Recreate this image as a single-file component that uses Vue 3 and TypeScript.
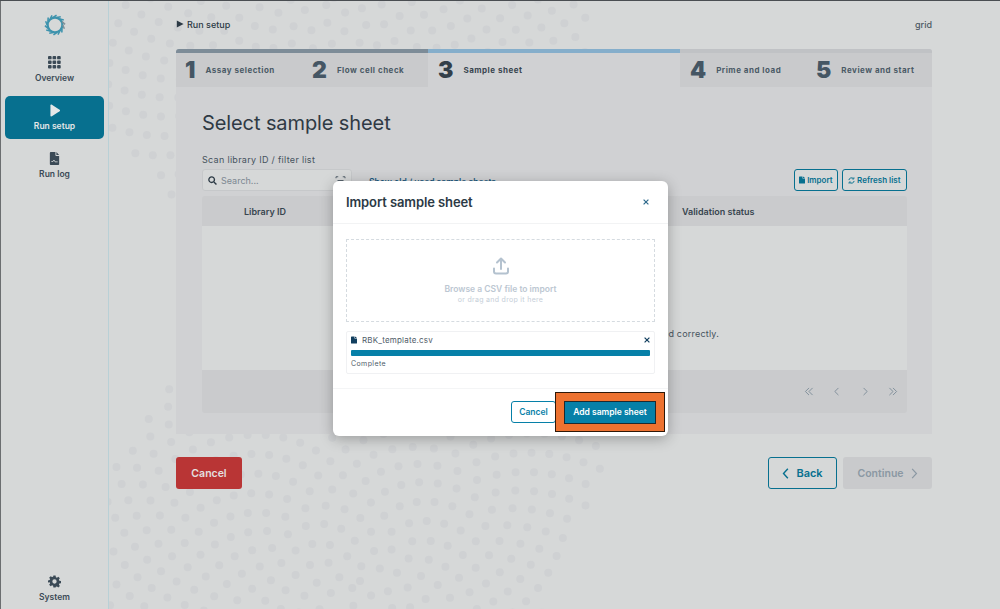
<script setup lang="ts">
const steps = [
    { n: 1, label: 'Assay selection', state: 'done' },
    { n: 2, label: 'Flow cell check', state: 'done' },
    { n: 3, label: 'Sample sheet', state: 'active' },
    { n: 4, label: 'Prime and load', state: 'todo' },
    { n: 5, label: 'Review and start', state: 'todo' },
]

// background dots: two sunflower discs, cut by the sidebar and the window
function makeDots(cx: number, cy: number, maxR: number, keep?: (x: number, y: number) => boolean) {
    const out: { x: number; y: number }[] = []
    const golden = Math.PI * (3 - Math.sqrt(5))
    for (let i = 0; i < 1400; i++) {
        const dist = 10.5 * Math.sqrt(i)
        if (dist > maxR) break
        const a = i * golden
        const x = cx + dist * Math.cos(a)
        const y = cy + dist * Math.sin(a)
        if (keep && !keep(x, y)) continue
        out.push({ x, y })
    }
    return out
}
const dots = [
    ...makeDots(334, -2, 258),
    ...makeDots(360, 581, 273, (x, y) => x < 605 - 0.39 * (y - 460)),
]

// little spokes around the logo ring
const spokes = Array.from({ length: 14 }, (_, i) => {
    const a = (i / 14) * Math.PI * 2
    const x1 = 12 + 8.5 * Math.cos(a)
    const y1 = 12 + 8.5 * Math.sin(a)
    const x2 = 12 + 11 * Math.cos(a + 0.38)
    const y2 = 12 + 11 * Math.sin(a + 0.38)
    return { x1, y1, x2, y2, grey: i >= 13 || i <= 0 }
})
</script>

<template>
    <div class="app">
        <aside class="sidebar">
            <svg class="logo" viewBox="0 0 24 24" fill="none">
                <circle cx="12" cy="12" r="8" stroke="#3e93ad" stroke-width="2.4" />
                <line
                    v-for="(s, i) in spokes"
                    :key="i"
                    :x1="s.x1" :y1="s.y1" :x2="s.x2" :y2="s.y2"
                    :stroke="s.grey ? '#7f9098' : '#3e93ad'"
                    stroke-width="1.7"
                />
            </svg>

            <a class="nav-item">
                <svg class="nav-icon" viewBox="0 0 14 14" fill="#3b4a56">
                    <template v-for="row in 3" :key="row">
                        <rect v-for="col in 3" :key="col" :x="(col - 1) * 4.9" :y="(row - 1) * 4.9" width="3.9" height="3.6" rx="1" />
                    </template>
                </svg>
                <span>Overview</span>
            </a>
            <a class="nav-item active">
                <svg class="nav-icon" viewBox="0 0 14 14" fill="#e4e7e8">
                    <path d="M2.6 1.6c0-.9.9-1.3 1.6-.9l8.3 5.4c.6.4.6 1.3 0 1.7l-8.3 5.4c-.7.4-1.6 0-1.6-.9z" />
                </svg>
                <span>Run setup</span>
            </a>
            <a class="nav-item">
                <svg class="nav-icon" viewBox="0 0 14 14" fill="#3b4a56">
                    <path d="M2 1.2C2 .5 2.5 0 3.2 0H8v3.4c0 .5.4.9.9.9H12v8.5c0 .7-.5 1.2-1.2 1.2H3.2C2.5 14 2 13.5 2 12.8z" />
                    <path d="M9 0l3 3.3H9z" />
                    <path d="M3.6 10.2h1.8l1-1.6 1.2 2h2.8" fill="none" stroke="#d6d8d8" stroke-width=".9" />
                </svg>
                <span>Run log</span>
            </a>

            <a class="nav-item system">
                <svg class="nav-icon" viewBox="0 0 24 24" fill="#3b4a56">
                    <path fill-rule="evenodd" d="M10 1h4l.6 3.1 1.9.8 2.6-1.800 2.800 2.800-1.800 2.600.8 1.900 3.100.6v4l-3.100.6-.8 1.900 1.800 2.600-2.800 2.800-2.600-1.800-1.900.8L14 23h-4l-.6-3.100-1.900-.8-2.600 1.800-2.800-2.800 1.800-2.600-.8-1.900L0 14v-4l3.100-.6.8-1.900L2.100 4.900l2.800-2.800 2.600 1.800 1.900-.8zM12 8a4 4 0 1 0 0 8 4 4 0 0 0 0-8z" />
                </svg>
                <span>System</span>
            </a>
        </aside>

        <main class="main">
            <svg class="dots" width="1000" height="609" aria-hidden="true">
                <circle v-for="(d, i) in dots" :key="i" :cx="d.x" :cy="d.y" r="4" fill="#cfd1d3" />
            </svg>

            <header class="topbar">
                <div class="crumb">
                    <svg viewBox="0 0 10 10" width="8" height="8" fill="#2c3a45"><path d="M1 .5L9.500 5 1 9.500z" /></svg>
                    Run setup
                </div>
                <div class="host">grid</div>
            </header>

            <section class="panel">
                <ol class="stepper">
                    <li v-for="s in steps" :key="s.n" :class="['step', s.state]">
                        <b>{{ s.n }}</b>
                        <span>{{ s.label }}</span>
                    </li>
                </ol>

                <div class="panel-body">
                    <h1>Select sample sheet</h1>
                    <label class="scan-label">Scan library ID / filter list</label>

                    <div class="filter-row">
                        <div class="search">
                            <svg viewBox="0 0 16 16" width="9" height="9" fill="none" stroke="#2c3a45" stroke-width="2.400">
                                <circle cx="6.500" cy="6.500" r="5" /><path d="M10.500 10.500L15 15" />
                            </svg>
                            <span>Search...</span>
                            <svg class="scan" viewBox="0 0 14 12" width="11" height="9" fill="none" stroke="#3b4a56" stroke-width="1.100">
                                <path d="M1 3V1h3M10 1h3v2M1 9v2h3M10 11h3V9M3 6h8" />
                            </svg>
                        </div>
                        <a class="old-link">Show old / used sample sheets</a>
                        <div class="filter-actions">
                            <button class="btn-small import">
                                <svg viewBox="0 0 12 14" width="6" height="8" fill="#07708f"><path d="M0 1.200C0 .5.5 0 1.200 0H7v4h5v8.800c0 .7-.5 1.200-1.200 1.200H1.200C.5 14 0 13.500 0 12.800z" /><path d="M8 0l4 3H8z" /></svg>
                                Import
                            </button>
                            <button class="btn-small">
                                <svg viewBox="0 0 16 16" width="7" height="7" fill="none" stroke="#07708f" stroke-width="2.200">
                                    <path d="M2 7a6 6 0 0 1 10.500-3M14 9a6 6 0 0 1-10.500 3" />
                                    <path d="M13.500 .5v4h-4M2.500 15.500v-4h4" stroke-width="1.800" />
                                </svg>
                                Refresh list
                            </button>
                        </div>
                    </div>

                    <div class="table">
                        <div class="table-head">
                            <span class="col-library">Library ID</span>
                            <span class="col-status">Validation status</span>
                        </div>
                        <div class="table-body">
                            <p>have been imported correctly.</p>
                        </div>
                        <div class="table-foot">
                            <svg viewBox="0 0 14 12" fill="none" stroke="#7d8c98" stroke-width="1.300"><path d="M7 1L2 6l5 5M12 1L7 6l5 5" /></svg>
                            <svg viewBox="0 0 14 12" fill="none" stroke="#7d8c98" stroke-width="1.300"><path d="M9 1L4 6l5 5" /></svg>
                            <svg viewBox="0 0 14 12" fill="none" stroke="#7d8c98" stroke-width="1.300"><path d="M5 1l5 5-5 5" /></svg>
                            <svg viewBox="0 0 14 12" fill="none" stroke="#7d8c98" stroke-width="1.300"><path d="M2 1l5 5-5 5M7 1l5 5-5 5" /></svg>
                        </div>
                    </div>
                </div>
            </section>

            <footer class="actions">
                <button class="btn btn-cancel">Cancel</button>
                <div class="actions-right">
                    <button class="btn btn-back">
                        <svg viewBox="0 0 8 14" width="7" height="11" fill="none" stroke="#07708f" stroke-width="1.800"><path d="M7 1L1.500 7 7 13" /></svg>
                        Back
                    </button>
                    <button class="btn btn-continue">
                        Continue
                        <svg viewBox="0 0 8 14" width="7" height="11" fill="none" stroke="#8b98a3" stroke-width="1.500"><path d="M1 1l5.500 6L1 13" /></svg>
                    </button>
                </div>
            </footer>
        </main>

        <div class="modal">
            <div class="modal-head">
                <h2>Import sample sheet</h2>
                <svg class="close" viewBox="0 0 10 10" width="6" height="6" stroke="#2f6a8c" stroke-width="2"><path d="M1 1l8 8M9 1L1 9" /></svg>
            </div>

            <div class="modal-body">
                <div class="dropzone">
                    <svg viewBox="0 0 18 18" width="18" height="18" fill="none" stroke="#b4c2cf" stroke-width="2" stroke-linecap="round" stroke-linejoin="round">
                        <path d="M9 12V2M5 5.500L9 1.500l4 4M2 11.500v3c0 1.100.9 2 2 2h10c1.100 0 2-.9 2-2v-3" />
                    </svg>
                    <strong>Browse a CSV file to import</strong>
                    <small>or drag and drop it here</small>
                </div>

                <div class="file-card">
                    <div class="file-row">
                        <svg viewBox="0 0 12 14" width="6" height="8" fill="#123f5f"><path d="M0 1.200C0 .5.5 0 1.200 0H7v4h5v8.800c0 .7-.5 1.200-1.200 1.200H1.200C.5 14 0 13.500 0 12.800z" /><path d="M8 0l4 3H8z" /></svg>
                        <span>RBK_template.csv</span>
                        <svg class="close" viewBox="0 0 10 10" width="6" height="6" stroke="#123f5f" stroke-width="2"><path d="M1 1l8 8M9 1L1 9" /></svg>
                    </div>
                    <div class="progress"></div>
                    <small>Complete</small>
                </div>
            </div>

            <div class="modal-foot">
                <button class="btn-modal-cancel">Cancel</button>
                <div class="highlight">
                    <button class="btn-add">Add sample sheet</button>
                </div>
            </div>
        </div>
    </div>
</template>

<style>
html, body {
    margin: 0;
    background: #d6d8d8;
}
</style>

<style scoped>
.app {
    position: relative;
    display: flex;
    width: 1000px;
    height: 609px;
    overflow: hidden;
    box-sizing: border-box;
    background: #d6d8d8;
    border-top: 1px solid #4a4e52;
    font-family: Inter, "Liberation Sans", sans-serif;
    color: #2c3a45;
}

button {
    font-family: inherit;
    cursor: pointer;
}

.sidebar {
    flex: 0 0 109px;
    box-sizing: border-box;
    border-left: 1px solid #6b6e70;
    border-right: 1px solid #b9d0d6;
    padding: 13px 4px 0;
    display: flex;
    flex-direction: column;
    align-items: stretch;
}

.logo {
    align-self: center;
    width: 22px;
    height: 22px;
    margin-bottom: 12px;
}

.nav-item {
    display: flex;
    flex-direction: column;
    align-items: center;
    gap: 4px;
    height: 43px;
    margin-bottom: 5px;
    padding-top: 8px;
    box-sizing: border-box;
    border-radius: 5px;
    font-size: 8.500px;
    font-weight: 600;
    color: #3b4a56;
}

.nav-item.active {
    background: #07708f;
    color: #e4e7e8;
}

.nav-item.system {
    margin-top: auto;
    margin-bottom: 0;
    height: 34px;
    padding-top: 0;
}

.nav-icon {
    width: 13px;
    height: 13px;
}

.main {
    position: relative;
    flex: 1;
    overflow: hidden;
    padding: 0 68px 0 67px;
    display: flex;
    flex-direction: column;
}

.dots {
    position: absolute;
    left: -109px;
    top: -1px;
}

.topbar {
    position: relative;
    display: flex;
    justify-content: space-between;
    align-items: center;
    box-sizing: border-box;
    height: 48px;
    padding-bottom: 2px;
    font-size: 9px;
    font-weight: 500;
}

.crumb {
    display: flex;
    align-items: center;
    gap: 3px;
}

.host {
    color: #4d5a64;
}

.panel {
    position: relative;
    height: 385px;
    background: #d0d1d3;
    border-radius: 3px 3px 0 0;
    overflow: hidden;
}

.stepper {
    display: grid;
    grid-template-columns: repeat(6, 1fr);
    list-style: none;
    margin: 0;
    padding: 0;
}

.step {
    height: 38px;
    box-sizing: border-box;
    padding-left: 10px;
    display: flex;
    align-items: center;
    gap: 10px;
    background: #c9cacc;
    border-top: 4px solid #c0c2c5;
    color: #4b5a66;
    font-size: 8px;
    font-weight: 700;
    letter-spacing: .5px;
}

.step:first-child {
    padding-left: 9px;
}

.step b {
    font-size: 23px;
    font-weight: 900;
    letter-spacing: 0;
    line-height: 1;
    color: #455664;
}

.step.done {
    border-top-color: #7d8c98;
}

.step.active {
    grid-column: span 2;
    background: #d0d1d3;
    border-top-color: #85aecb;
    color: #38454f;
}

.step.active b {
    color: #333f49;
}

.panel-body {
    padding: 24px 25px 0 26px;
}

h1 {
    margin: 0;
    font-size: 20px;
    line-height: 24px;
    font-weight: 400;
    letter-spacing: -.1px;
    color: #2f3a44;
}

.scan-label {
    display: block;
    margin-top: 19px;
    font-size: 9px;
    line-height: 11px;
    letter-spacing: .3px;
    color: #46535e;
}

.filter-row {
    display: flex;
    align-items: center;
    gap: 17px;
    margin-top: 4px;
    height: 22px;
}

.search {
    box-sizing: border-box;
    width: 150px;
    height: 22px;
    display: flex;
    align-items: center;
    gap: 4px;
    padding: 0 5px;
    border: 1px solid #c6c8ca;
    border-radius: 3px;
    background: #d6d8d8;
    font-size: 9px;
    color: #7d8892;
}

.search .scan {
    margin-left: auto;
}

.old-link {
    margin-top: 3px;
    font-size: 8.500px;
    font-weight: 600;
    color: #1d5a80;
}

.filter-actions {
    margin-left: auto;
    display: flex;
    gap: 4px;
}

.btn-small {
    height: 22px;
    padding: 0 5.500px;
    display: flex;
    align-items: center;
    gap: 2px;
    border: 1.500px solid #07708f;
    border-radius: 3px;
    background: #d6d8d8;
    color: #07708f;
    font-size: 8px;
    font-weight: 600;
}

.btn-small.import {
    padding: 0 4px;
}

.table {
    margin-top: 5px;
    border-radius: 3px;
    overflow: hidden;
}

.table-head {
    position: relative;
    height: 30px;
    background: #cacbcd;
    font-size: 9px;
    font-weight: 600;
    color: #38454f;
}

.table-head span {
    position: absolute;
    top: 10px;
}

.col-library {
    left: 42px;
}

.col-status {
    left: 480px;
}

.table-body {
    box-sizing: border-box;
    height: 144px;
    padding-right: 188px;
    background: #d6d8d8;
    display: flex;
    align-items: center;
    justify-content: flex-end;
    font-size: 9px;
    letter-spacing: .2px;
    color: #46535e;
}

.table-body p {
    margin: 70px 0 0 0;
}

.table-foot {
    height: 43px;
    background: #cacbcd;
    display: flex;
    align-items: center;
    justify-content: flex-end;
    gap: 18px;
    padding-right: 9px;
}

.table-foot svg {
    width: 10px;
    height: 9px;
}

.actions {
    position: relative;
    display: flex;
    justify-content: space-between;
    margin-top: 23px;
}

.actions-right {
    display: flex;
    gap: 6px;
}

.btn {
    height: 32px;
    display: flex;
    align-items: center;
    justify-content: center;
    gap: 7px;
    border-radius: 3px;
    font-size: 11px;
    font-weight: 600;
    border: 1px solid transparent;
}

.btn-cancel {
    width: 66px;
    background: #b93535;
    color: #e4e0e0;
    font-size: 10.500px;
}

.btn-back {
    width: 69px;
    background: #d6d8d8;
    border-color: #07708f;
    color: #07708f;
}

.btn-continue {
    width: 89px;
    background: #c9cacc;
    color: #8b98a3;
    cursor: default;
    font-size: 10.500px;
}

.modal {
    position: absolute;
    left: 333px;
    top: 180px;
    width: 335px;
    height: 255px;
    background: #fff;
    border-radius: 6px;
    box-shadow: 0 3px 14px rgba(0, 0, 0, .28);
    display: flex;
    flex-direction: column;
}

.modal-head {
    flex: 0 0 43px;
    box-sizing: border-box;
    display: flex;
    align-items: center;
    justify-content: space-between;
    padding: 0 19px 0 13px;
    border-bottom: 1px solid #f2f3f4;
}

h2 {
    margin: 0;
    font-size: 13px;
    font-weight: 600;
    letter-spacing: -.1px;
    color: #2c3a45;
}

.modal-body {
    flex: 1;
    padding: 15px 13px 0;
}

.dropzone {
    box-sizing: border-box;
    height: 83px;
    border: 1px dashed #d5dbe0;
    display: flex;
    flex-direction: column;
    align-items: center;
    padding-top: 17px;
    color: #bcc7d2;
}

.dropzone strong {
    margin-top: 9px;
    font-size: 8.500px;
    font-weight: 600;
}

.dropzone small {
    margin-top: 1px;
    font-size: 7px;
    letter-spacing: .3px;
    color: #c5ced8;
}

.file-card {
    box-sizing: border-box;
    height: 43px;
    margin-top: 9px;
    padding: 3px 4px 0;
    border: 1px solid #f0f1f3;
    border-radius: 2px;
    letter-spacing: .2px;
    color: #4f5c68;
}

.file-row {
    display: flex;
    align-items: center;
    gap: 5px;
    height: 10px;
    font-size: 8px;
}

.file-row .close {
    margin-left: auto;
}

.progress {
    height: 6px;
    margin-top: 5px;
    border-radius: 1px;
    background: #0680a8;
}

.file-card small {
    display: block;
    margin-top: 3px;
    font-size: 7px;
    letter-spacing: .4px;
}

.modal-foot {
    flex: 0 0 48px;
    box-sizing: border-box;
    border-top: 1px solid #f4f5f6;
    display: flex;
    justify-content: flex-end;
    align-items: center;
    padding: 0 3px 1px 0;
}

.btn-modal-cancel {
    height: 22px;
    width: 45px;
    margin-right: -1px;
    background: #fff;
    border: 1px solid #0680a8;
    border-radius: 3px;
    color: #0680a8;
    font-size: 8.500px;
    font-weight: 600;
}

.highlight {
    box-sizing: border-box;
    width: 110px;
    height: 40px;
    display: flex;
    align-items: center;
    justify-content: center;
    background: #ed7230;
    border: 1px solid #2f1808;
}

.btn-add {
    width: 92px;
    height: 23px;
    background: #0680a8;
    border: 1px solid #1c2a30;
    color: #fff;
    font-size: 8.500px;
    font-weight: 600;
}
</style>
